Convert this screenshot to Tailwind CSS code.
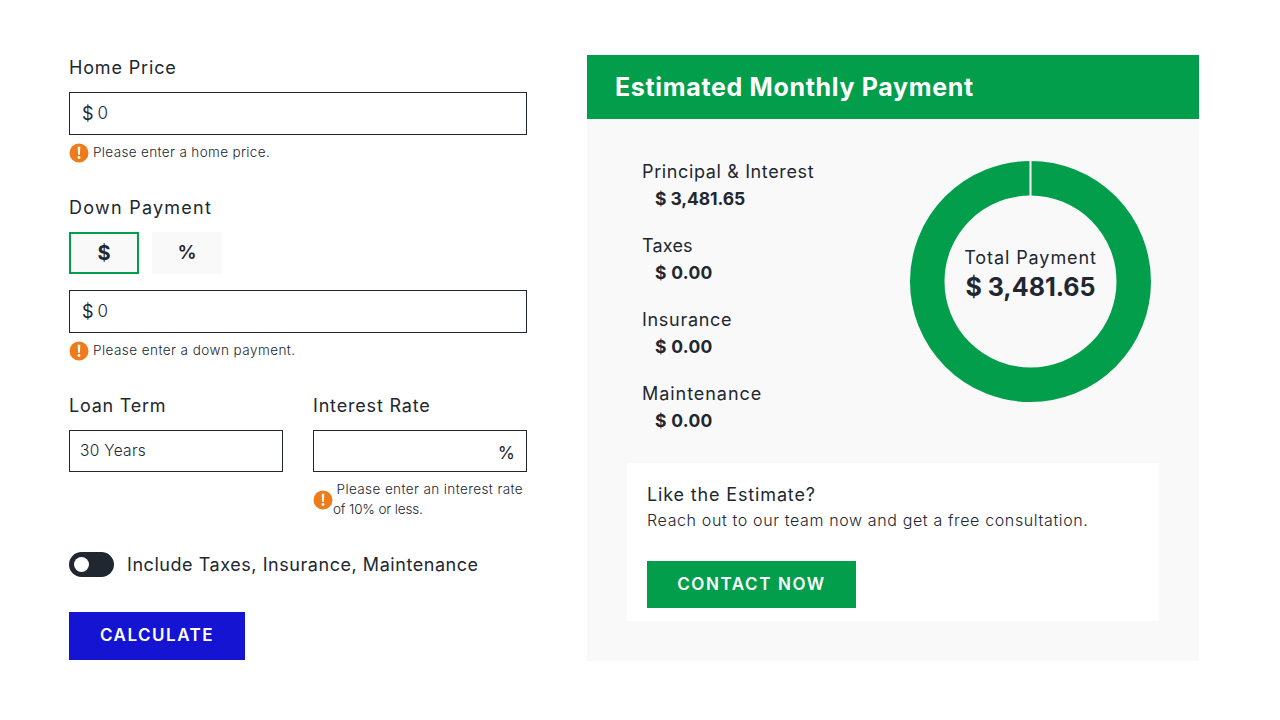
<!DOCTYPE html>
<html lang="en">
<head>
<meta charset="utf-8">
<title>Mortgage Calculator</title>
<script src="https://cdn.jsdelivr.net/npm/@tailwindcss/browser@4"></script>
</head>
<body class="h-[720px] w-[1280px] overflow-hidden bg-white font-['Inter','Open_Sans',sans-serif] text-[#212730]">
<svg class="hidden">
  <symbol id="alert" viewBox="0 0 20 20"><circle cx="10" cy="10" r="9.5" fill="#ef7c1a"/><path d="M8.7 3.8h2.6l-.4 8H9.1z" fill="#fff"/><circle cx="10" cy="14.5" r="1.4" fill="#fff"/></symbol>
</svg>
<main class="flex gap-[60px] pt-[55px] pl-[69px]">
  <form class="flex w-[458px] flex-col items-start pt-[3px] whitespace-nowrap">
    <label class="h-5 text-[18px] leading-5 tracking-[0.85px]">Home Price</label>
    <div class="mt-[14px] flex h-[43px] w-full items-center border border-[#212730] pl-3">
      <span class="text-[18px]">$</span><span class="ml-1 pb-px text-[17px] leading-6 font-light">0</span>
    </div>
    <p class="mt-2 flex h-5 items-center gap-[4px] text-[13.5px] leading-[18px] font-light tracking-[0.36px]">
      <svg class="size-5"><use href="#alert"/></svg><span class="pb-[2px]">Please enter a home price.</span>
    </p>

    <label class="mt-[35px] h-5 text-[18px] leading-5 tracking-[1.25px]">Down Payment</label>
    <div class="mt-[14px] flex gap-[13px]">
      <div class="flex h-[42px] w-[70px] items-center justify-center border-2 border-[#039e4c] bg-[#f9f9f9] text-[20px] font-bold">$</div>
      <div class="flex h-[42px] w-[70px] items-center justify-center bg-[#f9f9f9] text-[19px] leading-7 font-semibold">%</div>
    </div>
    <div class="mt-4 flex h-[43px] w-full items-center border border-[#212730] pl-3">
      <span class="text-[18px]">$</span><span class="ml-1 pb-px text-[17px] leading-6 font-light">0</span>
    </div>
    <p class="mt-2 flex h-5 items-center gap-[4px] text-[13.5px] leading-[18px] font-light tracking-[0.45px]">
      <svg class="size-5"><use href="#alert"/></svg><span class="pb-[2px]">Please enter a down payment.</span>
    </p>

    <div class="mt-[35px] flex h-[121px] gap-[30px]">
      <div class="w-[214px]">
        <label class="block h-5 text-[18px] leading-5 tracking-[0.75px]">Loan Term</label>
        <div class="mt-[14px] flex h-[42px] items-center border border-[#212730] pl-[10px] text-[15.5px] font-light tracking-[0.3px]">30 Years</div>
      </div>
      <div class="w-[214px]">
        <label class="block h-5 text-[18px] leading-5 tracking-[0.82px]">Interest Rate</label>
        <div class="mt-[14px] flex h-[42px] items-center justify-end border border-[#212730] pt-[5px] pr-[11px] text-[17.5px]">%</div>
        <div class="mt-[9px] flex items-center text-[13.5px] leading-5 font-light">
          <svg class="size-5 shrink-0"><use href="#alert"/></svg>
          <p class="-mt-[2px]"><span class="pl-[3.5px] tracking-[0.4px]">Please enter an interest rate</span><br><span class="tracking-[-0.15px]">of 10% or less.</span></p>
        </div>
      </div>
    </div>

    <div class="mt-[35px] flex h-[25px] items-center gap-[13px]">
      <div class="flex h-[25px] w-[45px] items-center rounded-full bg-[#212730] pl-[5px]"><span class="size-[15px] rounded-full bg-white"></span></div>
      <span class="text-[18px] tracking-[0.55px]">Include Taxes, Insurance, Maintenance</span>
    </div>
    <button type="button" class="mt-[35px] h-[48px] w-[176px] bg-[#1414d2] pb-[1px] text-[17px] leading-[25px] font-semibold tracking-[1.5px] text-white">CALCULATE</button>
  </form>

  <section class="h-[606px] w-[612px] bg-[#f9f9f9] whitespace-nowrap">
    <h2 class="flex h-16 items-center bg-[#039e4c] pt-[2px] pl-[28px] text-[25px] font-bold tracking-[0.66px] text-white">Estimated Monthly Payment</h2>
    <div class="flex h-[344px] pt-[39px] pl-[55px]">
      <dl class="w-[268px] text-[18px] leading-[27px]">
        <dt class="tracking-[0.63px]">Principal &amp; Interest</dt>
        <dd class="mb-5 pl-[13px] text-[17.5px] font-bold tracking-[-0.1px]">$ 3,481.65</dd>
        <dt class="tracking-[0.2px]">Taxes</dt>
        <dd class="mb-5 pl-[13px] text-[17.5px] font-bold tracking-[0.3px]">$ 0.00</dd>
        <dt class="tracking-[0.7px]">Insurance</dt>
        <dd class="mb-5 pl-[13px] text-[17.5px] font-bold tracking-[0.3px]">$ 0.00</dd>
        <dt class="tracking-[0.95px]">Maintenance</dt>
        <dd class="pl-[13px] text-[17.5px] font-bold tracking-[0.3px]">$ 0.00</dd>
      </dl>
      <div class="mt-[3px] grid size-[241px] place-items-center">
        <svg class="col-start-1 row-start-1 size-[241px]" viewBox="0 0 241 241">
          <circle cx="120.5" cy="120.5" r="103.25" fill="none" stroke="#039e4c" stroke-width="34.5"/>
          <path d="M120.5 0v35" stroke="#fff" stroke-width="2"/>
        </svg>
        <div class="col-start-1 row-start-1 pb-[18px] text-center">
          <div class="text-[18px] leading-[28px] tracking-[0.92px]">Total Payment</div>
          <div class="text-[25px] leading-[30px] font-bold">$ 3,481.65</div>
        </div>
      </div>
    </div>
    <div class="mx-10 h-[158px] bg-white px-5 pt-[19px]">
      <h3 class="text-[18px] leading-[26px] tracking-[0.85px]">Like the Estimate?</h3>
      <p class="text-[16px] leading-[24px] font-light tracking-[0.63px]">Reach out to our team now and get a free consultation.</p>
      <button type="button" class="mt-[29px] h-[47px] w-[209px] bg-[#039e4c] text-[17px] leading-[25px] font-semibold tracking-[1.6px] text-white">CONTACT NOW</button>
    </div>
  </section>
</main>
</body>
</html>
